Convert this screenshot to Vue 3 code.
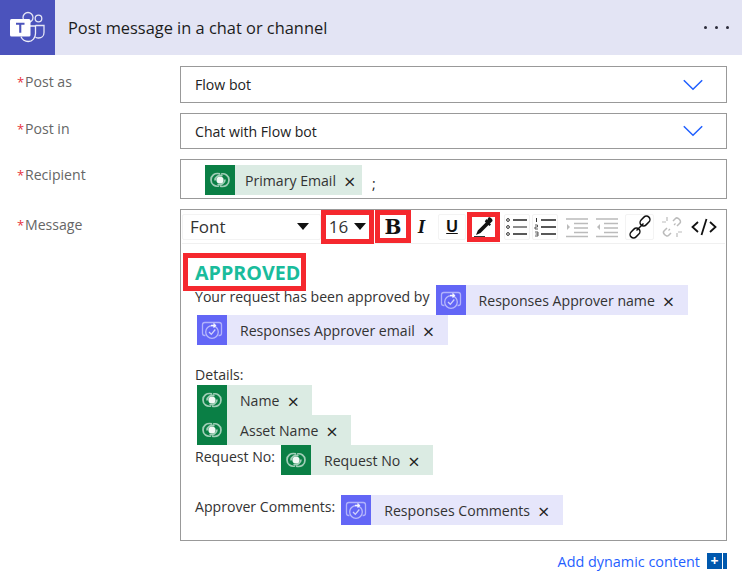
<script setup>
const fields = [
  { label: 'Post as', value: 'Flow bot', cls: 'h37' },
  { label: 'Post in', value: 'Chat with Flow bot', cls: 'h36' }
]
const lines = [
  { cls: 'l-head', items: [{ text: 'Your request has been approved by' }, { chip: 'p', text: 'Responses Approver name' }] },
  { items: [{ chip: 'p', text: 'Responses Approver email' }] },
  { cls: 'l-details', items: [{ text: 'Details:' }] },
  { items: [{ chip: 'g', text: 'Name' }] },
  { items: [{ chip: 'g', text: 'Asset Name' }] },
  { items: [{ text: 'Request No:' }, { chip: 'g', text: 'Request No' }] },
  { cls: 'l-approver', items: [{ text: 'Approver Comments:' }, { chip: 'p', text: 'Responses Comments' }] }
]
</script>

<template>
  <div class="card">
    <svg width="0" height="0" class="defs">
      <symbol id="dv" viewBox="0 0 30 30">
        <g fill="none" stroke="#fff" stroke-opacity=".62" stroke-width="1.700">
          <path d="M15 8.800C9.500 7.500 6 10.500 6 15c0 4.500 4 7 8 6"/>
          <path d="M15 21.200c5.500 1.300 9-1.700 9-6.200 0-4.500-4-7-8-6"/>
          <path d="M10 15.500c0-4 4-6 7.500-4.800"/>
          <path d="M20 14.500c0 4-4 6-7.500 4.800"/>
        </g>
        <circle cx="15" cy="15" r="3.600" fill="#fff" fill-opacity=".95"/>
      </symbol>
      <symbol id="ap" viewBox="0 0 30 30">
        <path d="M8.500 20.500H7.800c-1.300 0-2.300-1-2.300-2.300V9.800c0-1.300 1-2.300 2.300-2.300h14.400c1.300 0 2.300 1 2.300 2.300v8.400c0 1.300-1 2.300-2.300 2.300h-.7" fill="none" stroke="#fff" stroke-opacity=".5" stroke-width="1.300"/>
        <circle cx="15" cy="17" r="7" fill="#6366f6"/>
        <circle cx="15" cy="17" r="6.300" fill="none" stroke="#fff" stroke-opacity=".55" stroke-width="1.300"/>
        <path d="M12 17l2.300 2.300 4-4.800" fill="none" stroke="#fff" stroke-opacity=".7" stroke-width="1.300"/>
        <path d="M14 10.500h4M16.500 8.500l2 2-2 2" fill="none" stroke="#fff" stroke-opacity=".9" stroke-width="1.300"/>
      </symbol>
    </svg>

    <header class="head">
      <div class="logo">
        <svg width="55" height="55" viewBox="0 0 55 55">
          <circle cx="28" cy="17.500" r="5" fill="none" stroke="#fff" stroke-opacity=".85" stroke-width="1.300"/>
          <circle cx="38.500" cy="18.500" r="3.300" fill="none" stroke="#fff" stroke-opacity=".85" stroke-width="1.300"/>
          <path d="M22 26h13.500v7.500c0 4.300-3 8-7.300 8-3.500 0-6-2-7.200-4.700" fill="none" stroke="#fff" stroke-opacity=".9" stroke-width="1.300"/>
          <path d="M35.500 25.500h8.500v7c0 3.500-2.500 5.500-5.300 5.500-1.400 0-2.300-.3-3.200-.8" fill="none" stroke="#fff" stroke-opacity=".85" stroke-width="1.300"/>
          <rect x="10" y="19" width="20.500" height="17.500" rx="1.500" fill="#fff"/>
          <path d="M16 22.800h8.500v1.900h-3.200v8h-2.100v-8H16z" fill="#4b53bc"/>
        </svg>
      </div>
      <div class="title">Post message in a chat or channel</div>
      <div class="dots"><i></i><i></i><i></i></div>
    </header>

    <div class="form">
      <div v-for="f in fields" :key="f.label" class="row">
        <div class="label"><span class="star">*</span>{{ f.label }}</div>
        <div class="box select" :class="f.cls">
          <span>{{ f.value }}</span>
          <svg class="chev" width="20" height="12" viewBox="0 0 20 12"><path d="M.8 1.200 10 10.200l9.200-9" fill="none" stroke="#1f5fff" stroke-width="1.500"/></svg>
        </div>
      </div>

      <div class="row">
        <div class="label"><span class="star">*</span>Recipient</div>
        <div class="box recipient">
          <span class="chip g tight">
            <span class="chip-ic"><svg width="30" height="30"><use href="#dv"/></svg></span>
            <span class="chip-tx">Primary Email</span>
            <span class="chip-x">×</span>
          </span>
          <span class="semi">;</span>
        </div>
      </div>

      <div class="row">
        <div class="label"><span class="star">*</span>Message</div>
        <div class="editor">
          <div class="toolbar">
            <div class="tb font">Font<i class="caret"></i></div>
            <div class="tb size red">16<i class="caret"></i></div>
            <div class="tb bold red">B</div>
            <div class="tb ital">I</div>
            <div class="tb under">U</div>
            <div class="tb pen red">
              <svg width="22" height="22" viewBox="0 0 22 22"><path d="M15.500 1.500c1.500-1.200 5 2.300 3.800 3.800l-2.300 2.300 1 1-1.500 1.500-1-1-8 8-4.500 1.800 1.800-4.500 8-8-1-1L13.300 3l.9.900z" fill="#111"/><path d="M1 20.500h11" stroke="#333" stroke-width="1"/></svg>
            </div>
            <div class="tb b1">
              <svg width="24" height="22" viewBox="0 0 24 22"><g fill="none" stroke="#333"><circle cx="3" cy="4" r="1.400"/><circle cx="3" cy="11" r="1.400"/><circle cx="3" cy="18" r="1.400"/></g><path d="M8 4h14" stroke="#222" stroke-width="1.500"/><path d="M8 11h14" stroke="#666" stroke-width="1.500"/><path d="M8 18h14" stroke="#222" stroke-width="1.500"/></svg>
            </div>
            <div class="tb b2">
              <svg width="24" height="22" viewBox="0 0 24 22"><g fill="none" stroke="#333"><path d="M3.500 2v4" stroke-width="1"/><path d="M2 9h2.500v2H2v2h3" stroke-width=".8"/><path d="M2 16h3v2H2.500M5 18v2H2" stroke-width=".8"/></g><path d="M8 4h15M8 11h15M8 18h15" stroke="#222" stroke-width="1.700"/></svg>
            </div>
            <div class="tb b3">
              <svg width="24" height="22" viewBox="0 0 24 22"><path d="M1 3h22M9 7.500h14M9 12h14M9 16.500h14M1 20.500h22" stroke="#bbb" stroke-width="1.300"/><path d="M2 8v6l3-3z" fill="#bbb"/></svg>
            </div>
            <div class="tb b4">
              <svg width="24" height="22" viewBox="0 0 24 22"><path d="M1 3h22M9 7.500h14M9 12h14M9 16.500h14M1 20.500h22" stroke="#bbb" stroke-width="1.300"/><path d="M5 8v6l-3-3z" fill="#bbb"/></svg>
            </div>
            <div class="tb b5">
              <svg width="24" height="24" viewBox="0 0 24 24" fill="none" stroke="#111" stroke-width="1.500"><rect x="11.500" y="2.500" width="11" height="7" rx="3.500" transform="rotate(-45 17 6)"/><rect x="1.500" y="14.500" width="11" height="7" rx="3.500" transform="rotate(-45 7 18)"/><path d="M8.500 15.500l7-7"/></svg>
            </div>
            <div class="tb b6">
              <svg width="24" height="24" viewBox="0 0 24 24" fill="none" stroke="#bbb" stroke-width="1.500"><path d="M13 6l2.500-2.500c2-2 6.500 2.500 4.500 4.500l-3 3M11 18l-2.500 2.500c-2 2-6.500-2.500-4.500-4.500l3-3"/><path d="M10 14l-1.500 1.500M14 10l1.500-1.500M7 2v4M2 7h4M17 22v-4M22 17h-4" stroke-width="1.200"/></svg>
            </div>
            <div class="tb b7">
              <svg width="26" height="22" viewBox="0 0 26 22" fill="none" stroke="#111" stroke-width="1.800"><path d="M7 6l-5.500 5L7 16M19 6l5.500 5L19 16M15.500 3l-5 16"/></svg>
            </div>
          </div>

          <div class="body">
            <div class="l-title"><span class="approved">APPROVED</span></div>
            <div v-for="(l, i) in lines" :key="i" class="line" :class="l.cls">
              <template v-for="(it, j) in l.items" :key="j">
                <span v-if="it.chip" class="chip" :class="[it.chip, l.items.length === 1 ? 'first' : '']">
                  <span class="chip-ic"><svg width="30" height="30"><use :href="it.chip === 'g' ? '#dv' : '#ap'"/></svg></span>
                  <span class="chip-tx">{{ it.text }}</span>
                  <span class="chip-x">×</span>
                </span>
                <span v-else class="plain">{{ it.text }}</span>
              </template>
            </div>
          </div>
        </div>
      </div>

      <div class="dyn">
        <span>Add dynamic content</span>
        <span class="plus">+</span>
        <span class="stripe"></span>
      </div>
    </div>
  </div>
</template>

<style>
html, body { background: #fff; }
</style>

<style scoped>
.card { width: 742px; height: 576px; overflow: hidden; font-family: "Open Sans", "Liberation Sans", sans-serif; font-size: 14.100px; color: #333; background: #fff; }
.defs { position: absolute; }
.head { height: 55px; background: #e3e4f4; display: flex; align-items: center; }
.logo { width: 55px; height: 55px; background: #4b53bc; flex: none; }
.title { margin-left: 13px; font-size: 16.400px; color: #1c1c1c; flex: 1; }
.dots { display: flex; gap: 8px; margin-right: 13px; }
.dots i { width: 3px; height: 3px; border-radius: 50%; background: #2b2b3a; }
.form { padding: 11px 15px 0 0; }
.row { display: flex; margin-bottom: 10px; }
.label { width: 180px; box-sizing: border-box; flex: none; padding: 7px 0 0 17px; color: #666; line-height: 18px; white-space: nowrap; }
.star { color: #e8323c; display: inline-block; width: 8px; font-size: 13px; }
.box { flex: 1; border: 1px solid #999; box-sizing: border-box; display: flex; align-items: center; color: #222; }
.h37 { height: 37px; }
.h36 { height: 36px; }
.select { padding: 0 23px 0 14px; justify-content: space-between; }
.recipient { height: 40px; padding-left: 24px; padding-top: 2px; }
.semi { margin-left: 10px; margin-top: 6px; }
.chip { display: inline-flex; height: 30px; align-items: flex-start; flex: none; }
.chip.g { background: #dbebe3; }
.chip.p { background: #e6e6fb; }
.chip.first { margin-left: 2px; }
.chip-ic { width: 30px; height: 30px; flex: none; display: block; }
.chip-ic svg { display: block; }
.chip.g .chip-ic { background: #0a7f45; }
.chip.p .chip-ic { background: #6366f6; }
.chip-tx { margin-left: 13px; line-height: 31px; white-space: nowrap; color: #333; }
.chip-x { margin: 0 15px 0 8px; width: 10px; text-align: center; font-size: 20px; line-height: 33px; color: #222; }
.tight .chip-tx { margin-left: 10px; }
.tight .chip-x { margin-right: 8px; }
.editor { flex: 1; border: 1px solid #999; box-sizing: border-box; height: 332px; }
.toolbar { height: 33px; border-bottom: 1px solid #f0f0f0; margin: 0 1px; display: flex; align-items: center; }
.tb { height: 26px; box-sizing: border-box; border: 1px solid #f3f3f3; border-radius: 2px; display: flex; align-items: center; justify-content: center; flex: none; color: #111; }
.font { width: 139px; justify-content: space-between; padding: 0 7px 1px; font-size: 17px; color: #333; }
.caret { width: 0; height: 0; border-left: 6px solid transparent; border-right: 6px solid transparent; border-top: 7px solid #111; margin-right: 4px; }
.size { width: 53px; height: 34px; margin-top: 1px; padding-bottom: 1px; font-size: 17px; color: #333; gap: 6px; }
.size .caret { margin: 0; }
.red { border: 5px solid #f5282e; border-radius: 0; }
.bold { width: 36px; height: 33px; margin-left: 1px; font-family: "DejaVu Serif", serif; font-weight: 700; font-size: 20px; }
.ital { width: 25px; padding-right: 4px; font-family: "Liberation Serif", serif; font-style: italic; font-weight: 700; font-size: 19px; border-color: transparent; }
.under { width: 28px; margin-left: 2px; text-decoration: underline; font-family: "Liberation Sans", sans-serif; font-weight: 700; font-size: 16px; }
.pen { width: 33px; height: 30px; margin-left: 1px; }
.b1 { width: 26px; margin-left: 4px; }
.b2 { width: 26px; margin-left: 2px; }
.b3 { width: 29px; margin-left: 4px; border-color: transparent; }
.b4 { width: 26px; margin-left: 3px; border-color: transparent; }
.b5 { width: 29px; margin-left: 5px; }
.b6 { width: 29px; margin-left: 3px; border-color: transparent; }
.b7 { width: 29px; margin-left: 3px; border-color: transparent; }
.body { padding: 14px 0 0 14px; }
.l-title { height: 27px; }
.approved { display: block; width: max-content; height: 28px; margin-left: -7px; padding: 0 1px 0 7px; font-size: 19.700px; line-height: 30px; font-weight: 700; color: #1abc9c; outline: 5px solid #f5282e; }
.line { display: flex; min-height: 30px; }
.plain { line-height: 24px; margin-right: 6px; white-space: nowrap; }
.l-details { margin-top: 18px; min-height: 22px; height: 22px; }
.l-approver { margin-top: 20px; }
.dyn { display: flex; align-items: center; justify-content: flex-end; margin-top: -6px; height: 32px; color: #1f5fff; font-size: 14.400px; }
.plus { width: 15px; height: 16px; background: #0058ad; color: #fff; margin-left: 7px; font-size: 14px; line-height: 16px; text-align: center; font-weight: 700; }
.stripe { width: 4px; height: 16px; background: #0058ad; margin-left: 1px; }
</style>
